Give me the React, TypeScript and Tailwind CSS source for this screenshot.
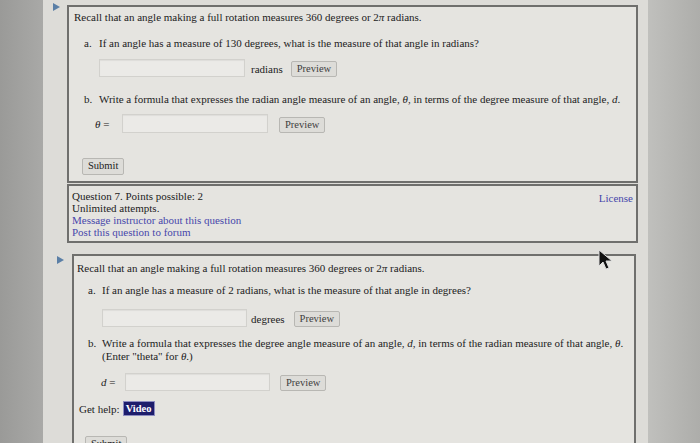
import React from "react";

const Tri = () => (
  <svg width="7" height="8" viewBox="0 0 7 8" className="block">
    <path d="M0 0 L7 4 L0 8 Z" fill="#5b7fa6" />
  </svg>
);

const Input = ({ w }: { w: string }) => (
  <div className={`${w} bg-[#ebeae7] border border-[#d2d1cd] shadow-[inset_0_1px_1px_rgba(0,0,0,0.06)]`} />
);

const Preview = () => (
  <div className="h-[16px] px-[5px] flex items-center bg-[#dddcd8] border border-[#b8b7b3] rounded-[2px] text-[10.5px] text-[#3d3d3d] leading-none">
    Preview
  </div>
);

export default function App() {
  return (
    <div
      className="relative w-[700px] h-[443px] overflow-hidden flex text-[#222222] text-[11px] leading-[14px]"
      style={{ fontFamily: '"Liberation Serif", "Times New Roman", serif' }}
    >
      <div className="w-[43px] shrink-0 bg-gradient-to-r from-[#9a9a98] to-[#a9a9a7]" />
      <div className="flex-1 bg-[#dddcd8] pt-[5px] pr-[10px] flex flex-col">
        {/* Question 6 */}
        <div className="flex">
          <div className="w-[24px] shrink-0 pl-[10px] pt-0">
            <div className="-mt-[2px]"><Tri /></div>
          </div>
          <div className="flex-1 flex flex-col">
            <div className="border-2 border-[#6f6f6d] bg-[#e5e4e0] pl-[5px] pt-[3px] pb-[6px]">
              <div className="whitespace-nowrap">Recall that an angle making a full rotation measures 360 degrees or 2<i>π</i> radians.</div>
              <div className="flex mt-[12px] pl-[10px] whitespace-nowrap">
                <span className="w-[15px]">a.</span>
                <span>If an angle has a measure of 130 degrees, what is the measure of that angle in radians?</span>
              </div>
              <div className="flex items-center mt-[8px] pl-[25px]">
                <Input w="w-[146px] h-[18px]" />
                <span className="ml-[6px] mt-[2px]">radians</span>
                <div className="ml-[8px] mt-[3px]"><Preview /></div>
              </div>
              <div className="flex mt-[15px] pl-[10px] whitespace-nowrap">
                <span className="w-[15px]">b.</span>
                <span>Write a formula that expresses the radian angle measure of an angle, <i>θ</i>, in terms of the degree measure of that angle, <i>d</i>.</span>
              </div>
              <div className="flex items-center mt-[8px] pl-[21px]">
                <span className="w-[27px] italic">θ <span className="not-italic">=</span></span>
                <Input w="w-[146px] h-[19px]" />
                <div className="ml-[11px] mt-[3px]"><Preview /></div>
              </div>
              <div className="mt-[25px] pl-[8px]">
                <div className="inline-flex h-[17px] px-[5px] items-center bg-[#dddcd8] border border-[#b8b7b3] rounded-[2px] text-[10.5px] leading-none">
                  Submit
                </div>
              </div>
            </div>
            <div className="mt-[1px] border-2 border-[#6f6f6d] bg-[#e5e4e0] pl-[3px] pr-[3px] pt-[4px] pb-[3px] leading-[12px] flex">
              <div className="flex-1">
                <div>Question 7. Points possible: 2</div>
                <div>Unlimited attempts.</div>
                <div className="text-[#4747ab]">Message instructor about this question</div>
                <div className="text-[#4747ab]">Post this question to forum</div>
              </div>
              <div className="text-[#4747ab] pt-[2px]">License</div>
            </div>
          </div>
        </div>

        {/* Question 7 */}
        <div className="flex mt-[11px]">
          <div className="w-[29px] shrink-0 pl-[14px] pt-[2px]">
            <Tri />
          </div>
          <div className="flex-1 mr-[2px] border-2 border-b-0 border-[#6f6f6d] bg-[#e5e4e0] pl-[3px] pt-[5px]">
            <div className="whitespace-nowrap">Recall that an angle making a full rotation measures 360 degrees or 2<i>π</i> radians.</div>
            <div className="flex mt-[8px] pl-[11px] whitespace-nowrap">
              <span className="w-[14px]">a.</span>
              <span>If an angle has a measure of 2 radians, what is the measure of that angle in degrees?</span>
            </div>
            <div className="flex items-center mt-[11px] pl-[25px]">
              <Input w="w-[145px] h-[18px]" />
              <span className="ml-[4px] mt-[2px]">degrees</span>
              <div className="ml-[9px] mt-[3px]"><Preview /></div>
            </div>
            <div className="flex mt-[10px] pl-[11px] leading-[13px] whitespace-nowrap">
              <span className="w-[14px]">b.</span>
              <span>
                Write a formula that expresses the degree angle measure of an angle, <i>d</i>, in terms of the radian measure of that angle, <i>θ</i>.
                <br />
                (Enter "theta" for <i>θ</i>.)
              </span>
            </div>
            <div className="flex items-center mt-[9px] pl-[24px]">
              <span className="w-[24px] italic">d <span className="not-italic">=</span></span>
              <Input w="w-[145px] h-[18px]" />
              <div className="ml-[10px] mt-[3px]"><Preview /></div>
            </div>
            <div className="flex items-center mt-[10px] pl-[2px]">
              <span>Get help:</span>
              <span className="ml-[3px] bg-[#1d1d6c] text-white font-bold px-[2px] h-[15px] flex items-center text-[10.5px] border border-[#8c8cc0]">
                Video
              </span>
            </div>
            <div className="mt-[20px] pl-[8px]">
              <div className="inline-flex h-[17px] px-[5px] items-center bg-[#dddcd8] border border-[#b8b7b3] rounded-[2px] text-[10.5px] leading-none">
                Submit
              </div>
            </div>
          </div>
        </div>
      </div>
      <div className="w-[52px] shrink-0 bg-gradient-to-r from-[#c0c0bd] to-[#adadaa]" />

      {/* mouse cursor */}
      <svg className="absolute left-[598px] top-[249px]" width="16" height="22" viewBox="0 0 16 22">
        <path d="M1 1 L1 17 L5 13 L8 20 L11 19 L8 12 L14 12 Z" fill="#111" stroke="#ddd" strokeWidth="1" />
      </svg>
    </div>
  );
}
